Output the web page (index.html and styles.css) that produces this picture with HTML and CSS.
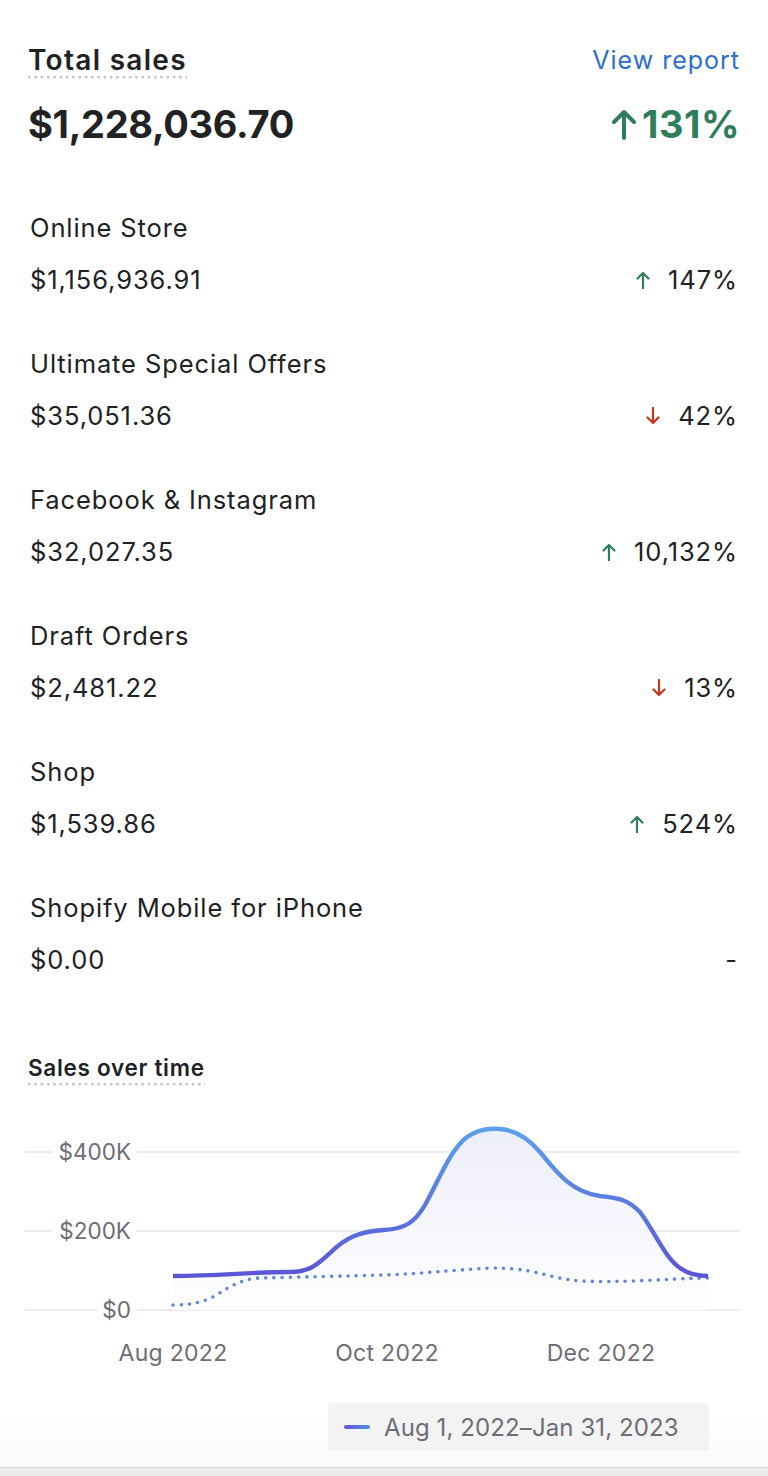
FILE: index.html
```html
<!DOCTYPE html>
<html>
<head>
<meta charset="utf-8">
<link rel="stylesheet" href="styles.css">
</head>
<body>
<div class="page">
  <div class="card">
    <div class="head">
      <span class="title dotted">Total sales</span>
      <a class="link">View report</a>
    </div>
    <div class="total">
      <span class="amount">$1,228,036.70</span>
      <span class="big-change up">
        <svg class="big-arrow" viewBox="0 0 24 32" width="24" height="32"><path d="M12 30V4M2 14L12 4l10 10" fill="none" stroke="currentColor" stroke-width="4" stroke-linecap="round" stroke-linejoin="round"/></svg>131%</span>
    </div>

    <div class="channels">
      <div class="channel">
        <div class="name">Online Store</div>
        <div class="row"><span>$1,156,936.91</span><span class="chg"><svg class="arr up" viewBox="0 0 14 18" width="14" height="18"><path d="M7 17V2M1.5 7.5L7 2l5.5 5.5" fill="none" stroke="currentColor" stroke-width="2.2" stroke-linecap="round" stroke-linejoin="round"/></svg>147%</span></div>
      </div>
      <div class="channel">
        <div class="name">Ultimate Special Offers</div>
        <div class="row"><span>$35,051.36</span><span class="chg"><svg class="arr down" viewBox="0 0 14 18" width="14" height="18"><path d="M7 1v15M1.5 10.5L7 16l5.5-5.5" fill="none" stroke="currentColor" stroke-width="2.2" stroke-linecap="round" stroke-linejoin="round"/></svg>42%</span></div>
      </div>
      <div class="channel">
        <div class="name">Facebook &amp; Instagram</div>
        <div class="row"><span>$32,027.35</span><span class="chg"><svg class="arr up" viewBox="0 0 14 18" width="14" height="18"><path d="M7 17V2M1.5 7.5L7 2l5.5 5.5" fill="none" stroke="currentColor" stroke-width="2.2" stroke-linecap="round" stroke-linejoin="round"/></svg>10,132%</span></div>
      </div>
      <div class="channel">
        <div class="name">Draft Orders</div>
        <div class="row"><span>$2,481.22</span><span class="chg"><svg class="arr down" viewBox="0 0 14 18" width="14" height="18"><path d="M7 1v15M1.5 10.5L7 16l5.5-5.5" fill="none" stroke="currentColor" stroke-width="2.2" stroke-linecap="round" stroke-linejoin="round"/></svg>13%</span></div>
      </div>
      <div class="channel">
        <div class="name">Shop</div>
        <div class="row"><span>$1,539.86</span><span class="chg"><svg class="arr up" viewBox="0 0 14 18" width="14" height="18"><path d="M7 17V2M1.5 7.5L7 2l5.5 5.5" fill="none" stroke="currentColor" stroke-width="2.2" stroke-linecap="round" stroke-linejoin="round"/></svg>524%</span></div>
      </div>
      <div class="channel">
        <div class="name">Shopify Mobile for iPhone</div>
        <div class="row"><span>$0.00</span><span class="chg">-</span></div>
      </div>
    </div>

    <div class="sub-head"><span class="subtitle dotted">Sales over time</span></div>

    <svg class="chart" viewBox="0 1100 768 285" width="768" height="285">
      <defs>
        <linearGradient id="lineGrad" gradientUnits="userSpaceOnUse" x1="0" y1="1128" x2="0" y2="1278">
          <stop offset="0" stop-color="#5ba2e8"/>
          <stop offset="1" stop-color="#5b55d6"/>
        </linearGradient>
        <linearGradient id="fillGrad" gradientUnits="userSpaceOnUse" x1="0" y1="1128" x2="0" y2="1310">
          <stop offset="0" stop-color="#eceefb"/>
          <stop offset="1" stop-color="#ffffff"/>
        </linearGradient>
      </defs>
      <g stroke="#ececee" stroke-width="2">
        <line x1="25" y1="1152" x2="52" y2="1152"/>
        <line x1="137" y1="1152" x2="740" y2="1152"/>
        <line x1="25" y1="1231" x2="52" y2="1231"/>
        <line x1="137" y1="1231" x2="740" y2="1231"/>
        <line x1="25" y1="1310" x2="97" y2="1310"/>
        <line x1="137" y1="1310" x2="740" y2="1310"/>
      </g>
      <g class="axis">
        <text x="131" y="1160" text-anchor="end">$400K</text>
        <text x="131" y="1239" text-anchor="end">$200K</text>
        <text x="131" y="1318" text-anchor="end">$0</text>
      </g>
      <g class="axis xaxis">
        <text x="173" y="1361" text-anchor="middle">Aug 2022</text>
        <text x="387" y="1361" text-anchor="middle">Oct 2022</text>
        <text x="601" y="1361" text-anchor="middle">Dec 2022</text>
      </g>
      <path d="M173,1276 C220,1276 250,1272 290,1272 C310,1272 318,1264 330,1253 C345,1238 360,1231 384,1230 C405,1229 415,1222 425,1205 C440,1178 450,1150 467,1137 C478,1129 490,1128 500,1129 C515,1130 528,1138 540,1152 C555,1170 570,1192 600,1196 C620,1198 628,1200 640,1212 C655,1232 665,1258 680,1268 C690,1275 700,1276 708,1276 L708,1310 L173,1310 Z" fill="url(#fillGrad)"/>
      <path d="M173,1305 C190,1305 200,1303 213,1297 C228,1288 240,1279 260,1278 C300,1277 350,1276 384,1275 C420,1274 450,1270 493,1268 C520,1268 535,1272 555,1277 C575,1282 595,1282 633,1281 C660,1280 690,1278 708,1278" fill="none" stroke="#5f88d4" stroke-width="3.6" stroke-linecap="round" stroke-dasharray="0 8.2"/>
      <path d="M173,1276 C220,1276 250,1272 290,1272 C310,1272 318,1264 330,1253 C345,1238 360,1231 384,1230 C405,1229 415,1222 425,1205 C440,1178 450,1150 467,1137 C478,1129 490,1128 500,1129 C515,1130 528,1138 540,1152 C555,1170 570,1192 600,1196 C620,1198 628,1200 640,1212 C655,1232 665,1258 680,1268 C690,1275 700,1276 708,1276" fill="none" stroke="url(#lineGrad)" stroke-width="4.4" stroke-linecap="butt"/>
    </svg>

    <div class="legend-row">
      <div class="legend">
        <span class="swatch"></span>
        <span class="legend-text">Aug 1, 2022–Jan 31, 2023</span>
      </div>
    </div>
  </div>
  <div class="footer"></div>
</div>
</body>
</html>
```

FILE: styles.css
```css
* { box-sizing: border-box; }
html, body {
  margin: 0;
  padding: 0;
  background: #ffffff;
}
body {
  font-family: Inter, "Noto Sans", "Liberation Sans", sans-serif;
  color: #202223;
}
.page {
  width: 768px;
  height: 1476px;
  display: flex;
  flex-direction: column;
  overflow: hidden;
}
.card {
  flex: 1;
  padding: 44px 28px 0 28px;
  background: linear-gradient(to bottom, #ffffff 0, #ffffff 1410px, #fafafa 100%);
}
.head {
  display: flex;
  justify-content: space-between;
  align-items: flex-start;
  height: 34px;
}
.dotted {
  background-image: radial-gradient(circle at 1.3px 1.3px, #c3c7ce 1.3px, transparent 1.5px);
  background-size: 6.3px 3px;
  background-repeat: repeat-x;
  background-position: 0 100%;
}
.title {
  font-size: 28px;
  font-weight: 600;
  line-height: 32px;
  padding-bottom: 3px;
  letter-spacing: 1.3px;
}
.link {
  font-size: 25px;
  line-height: 32px;
  color: #2c6ecb;
  letter-spacing: 1px;
}
.total {
  display: flex;
  justify-content: space-between;
  align-items: center;
  height: 44px;
  margin-top: 24px;
}
.amount {
  font-size: 38px;
  font-weight: 700;
  letter-spacing: -0.3px;
  line-height: 44px;
}
.big-change {
  display: flex;
  align-items: center;
  font-size: 38px;
  font-weight: 700;
  letter-spacing: 0.5px;
  line-height: 44px;
  color: #2e7d5b;
}
.big-arrow {
  margin-right: 6px;
  color: #2e7d5b;
}
.channels {
  margin-top: 62px;
  padding: 0 2px 0 2px;
}
.channel {
  display: flex;
  flex-direction: column;
  gap: 12px;
  margin-bottom: 44px;
}
.channel:last-child {
  margin-bottom: 0;
}
.name, .row {
  font-size: 25.5px;
  line-height: 40px;
  letter-spacing: 0.9px;
}
.row {
  display: flex;
  justify-content: space-between;
  align-items: center;
}
.chg {
  display: flex;
  align-items: center;
}
.arr {
  margin-right: 18px;
}
.arr.up { color: #2e7d5b; }
.arr.down { color: #c4391d; }
.sub-head {
  margin-top: 73px;
  height: 47px;
}
.subtitle {
  display: inline-block;
  font-size: 22.5px;
  font-weight: 600;
  line-height: 30px;
  padding-bottom: 3px;
  letter-spacing: 0.7px;
}
.chart {
  display: block;
  margin-left: -28px;
}
.axis text {
  font-family: Inter, "Noto Sans", "Liberation Sans", sans-serif;
  font-size: 22.5px;
  fill: #6d6d75;
}
.xaxis text {
  font-size: 23px;
  letter-spacing: 0.3px;
}
.legend-row {
  display: flex;
  margin-top: 18px;
  padding-left: 300px;
}
.legend {
  display: flex;
  align-items: center;
  width: 381px;
  height: 48px;
  background: #f3f3f4;
  border-radius: 4px;
  padding-left: 16px;
}
.swatch {
  width: 26px;
  height: 4px;
  border-radius: 2px;
  background: linear-gradient(to right, #6b4fe0, #4f92e0);
  margin-right: 14px;
}
.legend-text {
  font-size: 24px;
  color: #6d6d75;
  letter-spacing: 0.1px;
}
.footer {
  height: 9px;
  flex: none;
  background: #ebebeb;
  border-top: 1px solid #d6d6d6;
}
```
